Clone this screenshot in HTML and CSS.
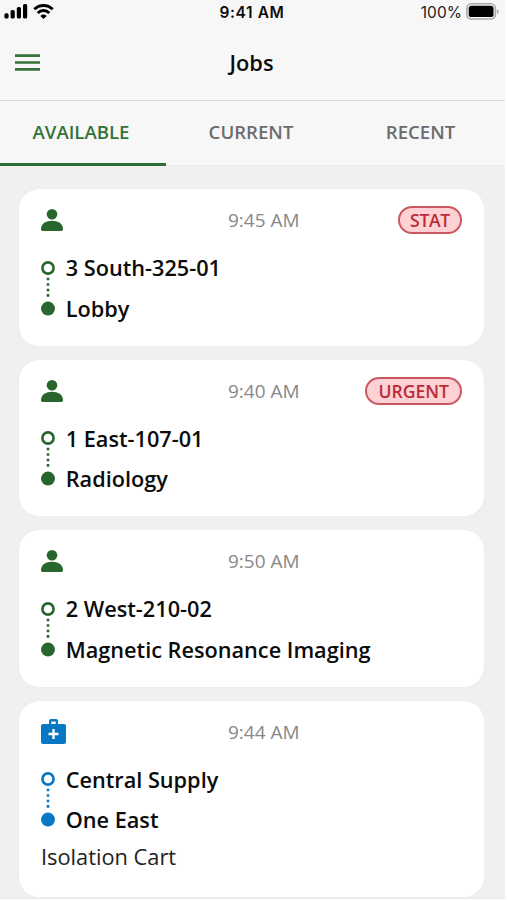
FILE: index.html
```html
<!DOCTYPE html>
<html lang="en">
<head>
<meta charset="utf-8">
<title>Jobs</title>
<link rel="stylesheet" href="styles.css">
</head>
<body>
<svg class="defs" width="0" height="0">
  <symbol id="person" viewBox="0 0 22 22"><circle cx="11" cy="5.3" r="5.3"/><path d="M0 20.2C0 14.5 5 11.7 11 11.7S22 14.5 22 20.2Q22 22 20.4 22H1.6Q0 22 0 20.2Z"/></symbol>
  <symbol id="route" viewBox="0 0 14 55"><circle cx="7" cy="7" r="5.6" fill="none" stroke="currentColor" stroke-width="2.6"/><path d="M5.7 16.7h2.6v2.6H5.7zM5.7 22.2h2.6v2.6H5.7zM5.7 27.7h2.6v2.6H5.7zM5.7 33.1h2.6v2.6H5.7z"/><circle cx="7" cy="47.6" r="7"/></symbol>
</svg>
<div class="screen">
  <header class="top">
    <div class="status">
      <div class="signals">
        <svg width="24" height="16" viewBox="0 0 24 16"><rect x="0.4" y="10.2" width="4.2" height="5.4" rx="1.6"/><rect x="6.6" y="7" width="4.2" height="8.6" rx="1.6"/><rect x="12.8" y="4" width="4.2" height="11.6" rx="1.6"/><rect x="19" y="1" width="4.2" height="14.6" rx="1.6"/></svg>
        <svg width="21" height="16" viewBox="0 0 21 16"><path d="M1.3 6.3a13 13 0 0 1 18.4 0M4.7 9.9a8.2 8.2 0 0 1 11.6 0" fill="none" stroke="#000" stroke-width="2.8"/><path d="M10.5 16L7.3 12.9Q10.5 10.2 13.7 12.9Z"/></svg>
      </div>
      <div class="clock">9:41 AM</div>
      <div class="power">
        <span class="percent">100%</span>
        <svg width="33" height="17" viewBox="0 0 33 17"><rect x=".8" y=".8" width="28.6" height="15.2" rx="4.5" fill="#f6f6f6" stroke="#aaa" stroke-width="1.6"/><rect x="2.7" y="2.7" width="24.8" height="11.4" rx="2.6"/><path d="M31 6q1.8 1 1.8 2.5T31 11z" fill="#aaa"/></svg>
      </div>
    </div>
    <div class="titlebar">
      <svg class="menu" width="25" height="18" viewBox="0 0 25 18"><path d="M0 1.7h25M0 8.5h25M0 15.3h25" stroke="currentColor" stroke-width="2.7"/></svg>
      <h1 class="title">Jobs</h1>
    </div>
  </header>
  <nav class="tabs">
    <div class="tab active"><span>AVAILABLE</span></div>
    <div class="tab"><span>CURRENT</span></div>
    <div class="tab"><span>RECENT</span></div>
  </nav>
  <main class="jobs">
    <article class="card">
      <div class="head"><svg class="icon"><use href="#person"/></svg><time class="time">9:45 AM</time><span class="badge stat">STAT</span></div>
      <div class="trip"><svg class="route"><use href="#route"/></svg><div class="stops"><div>3 South-325-01</div><div>Lobby</div></div></div>
    </article>
    <article class="card">
      <div class="head"><svg class="icon"><use href="#person"/></svg><time class="time">9:40 AM</time><span class="badge urgent">URGENT</span></div>
      <div class="trip"><svg class="route"><use href="#route"/></svg><div class="stops"><div>1 East-107-01</div><div>Radiology</div></div></div>
    </article>
    <article class="card">
      <div class="head"><svg class="icon"><use href="#person"/></svg><time class="time">9:50 AM</time></div>
      <div class="trip"><svg class="route"><use href="#route"/></svg><div class="stops"><div>2 West-210-02</div><div>Magnetic Resonance Imaging</div></div></div>
    </article>
    <article class="card supply">
      <div class="head"><svg class="kit" viewBox="0 0 25 25"><path fill-rule="evenodd" d="M8 5V2q0-2 2-2h5q2 0 2 2v3h6q2 0 2 2v16q0 2-2 2H2q-2 0-2-2V7q0-2 2-2zM10.3 2.5V5h4.4V2.5zM11.3 10v3.8H7.5v2.4h3.8V20h2.4v-3.8h3.8v-2.4h-3.8V10z"/></svg><time class="time">9:44 AM</time></div>
      <div class="trip"><svg class="route"><use href="#route"/></svg><div class="stops"><div>Central Supply</div><div>One East</div></div></div>
      <p class="item">Isolation Cart</p>
    </article>
  </main>
</div>
</body>
</html>
```
FILE: styles.css
```css
* { box-sizing: border-box; }
body { margin: 0; background: #fff; font-family: "Open Sans", sans-serif; color: #0c0c0c; }
svg { display: block; }
.defs { position: absolute; }
.screen { width: 505px; height: 899px; overflow: hidden; background: #f0f0f0; border-bottom: 1px solid #e9e9e9; }
.top { height: 101px; background: #f7f7f7; border-bottom: 1px solid #dadada; }
.status { height: 26px; display: grid; grid-template-columns: 1fr auto 1fr; align-items: start; padding: 3px 6px 0 4px; font-family: Inter, sans-serif; font-size: 15.5px; line-height: 20px; }
.signals { display: flex; gap: 5px; }
.clock { font-weight: 600; letter-spacing: .6px; margin-left: 1px; }
.power { display: flex; justify-content: flex-end; gap: 4px; }
.percent { color: #222; letter-spacing: .05px; }
.titlebar { height: 73px; display: grid; grid-template-columns: 1fr auto 1fr; align-items: center; padding: 0 15px; }
.menu { color: #38733e; }
.title { margin: 0 0 0 -2px; font-size: 21.8px; line-height: 30px; font-weight: 600; }
.tabs { height: 65px; display: grid; grid-template-columns: 166px 170px 169px; background: #f7f7f7; border-bottom: 1px solid #ececec; }
.tab { display: flex; align-items: center; justify-content: center; padding-bottom: 4px; font-size: 18.6px; font-weight: 600; color: #6c6c6c; }
.tab.active { height: 65px; color: #34723b; border-bottom: 3px solid #2f6e37; padding: 0 4px 1px 0; }
.jobs { padding: 23.3px 21px 0 19px; display: flex; flex-direction: column; gap: 14px; }
.card { height: 156.5px; padding: 17px 22px 0; border-radius: 20px; background: #fff; color: #28662e; box-shadow: 0 0 1px #ddd; }
.supply { height: 196px; color: #0878c4; }
.head { height: 28px; display: grid; grid-template-columns: 187px auto 1fr; align-items: center; }
.icon { width: 22px; height: 22px; fill: currentColor; }
.kit { width: 25px; height: 25px; fill: currentColor; }
.time { grid-column: 2; font-size: 19px; line-height: 26px; color: #888; }
.badge { justify-self: end; height: 28px; padding: 0 11px; border: 2px solid #cb5860; border-radius: 14px; background: #ffd0d4; color: #b92d39; font-size: 17.6px; line-height: 25px; font-weight: 600; }
.stat { padding: 0 10px; letter-spacing: -.3px; }
.trip { display: flex; gap: 11px; padding-top: 26px; }
.route { width: 14px; height: 55px; margin-top: .3px; margin-left: -.3px; fill: currentColor; }
.stops { color: #0c0c0c; font-size: 21.7px; line-height: 40.6px; font-weight: 600; margin-top: -12px; white-space: nowrap; }
.item { margin: 0; font-size: 21.8px; line-height: 32px; color: #222; }
```
